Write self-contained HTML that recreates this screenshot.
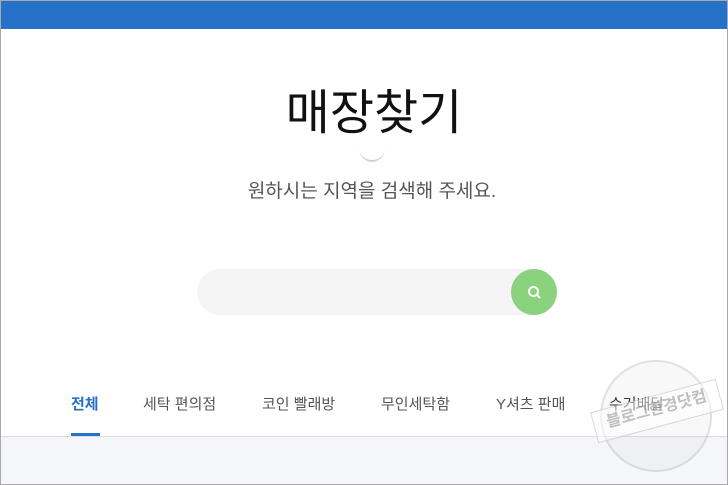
<!DOCTYPE html>
<html><head><meta charset="utf-8"><style>
*{margin:0;padding:0;box-sizing:border-box}
body{width:728px;height:485px;overflow:hidden;background:#fff;font-family:"Liberation Sans","Noto Sans CJK KR",sans-serif;position:relative}
.frame{position:absolute;inset:0;border:1px solid #a9a9a9;}
.bar{position:absolute;left:0;top:0;width:728px;height:29px;background:#2672c8;border-top:1px solid #7aa7d8}
h1{position:absolute;top:81px;left:10px;width:728px;text-align:center;font-size:48px;font-weight:400;color:#111;letter-spacing:0;line-height:66px}
.smile{position:absolute;left:359px;top:148px;width:26px;height:14px;border-bottom:2px solid #c5d3ea;border-radius:0 0 50% 50%/0 0 100% 100%}
.sub{position:absolute;top:179px;left:8px;width:728px;text-align:center;font-size:19px;color:#555;line-height:26px}
.search{position:absolute;left:197px;top:269px;width:360px;height:46px;border-radius:23px;background:#f5f5f5}
.btn{position:absolute;left:511px;top:269px;width:46px;height:46px;border-radius:50%;background:#8bd27e}
.tabs{position:absolute;top:393px;left:0;width:728px;font-size:15px;color:#555}
.tabs span{position:absolute;white-space:nowrap;line-height:24px}
.ul{position:absolute;left:71px;top:433px;width:29px;height:3px;background:#2672c8}
.bottom{position:absolute;left:1px;top:436px;width:726px;height:48px;background:#f5f6fa;border-top:1px solid #dcdde2}
.wm{position:absolute;left:600px;top:360px;width:112px;height:112px;border-radius:50%;border:2px solid rgba(150,150,150,.25);background:rgba(200,200,200,.12)}
.wm2{position:absolute;left:592px;top:395px;width:130px;height:32px;transform:rotate(-15deg);background:rgba(255,255,255,.5);border:1px solid rgba(150,150,150,.35);color:rgba(150,150,150,.6);font-size:16px;font-weight:bold;text-align:center;line-height:28px}
</style></head><body>
<div class="bar"></div>
<h1>매장찾기</h1>
<div class="smile"></div>
<div class="sub">원하시는 지역을 검색해 주세요.</div>
<div class="search"></div>
<div class="btn"><svg width="46" height="46" viewBox="0 0 46 46"><circle cx="22.5" cy="22.5" r="4.5" fill="none" stroke="#fff" stroke-width="2"/><line x1="25.8" y1="25.8" x2="28.5" y2="28.5" stroke="#fff" stroke-width="2" stroke-linecap="round"/></svg></div>
<div class="tabs">
<span style="left:71px;color:#2672c8;font-weight:bold">전체</span>
<span style="left:143px">세탁 편의점</span>
<span style="left:262px">코인 빨래방</span>
<span style="left:381px">무인세탁함</span>
<span style="left:496px">Y셔츠 판매</span>
<span style="left:609px;color:#222">수거배달</span>
</div>
<div class="ul"></div>
<div class="bottom"></div>
<div class="wm"></div>
<div class="wm2">블로그한경닷컴</div>
<div class="frame"></div>
</body></html>
